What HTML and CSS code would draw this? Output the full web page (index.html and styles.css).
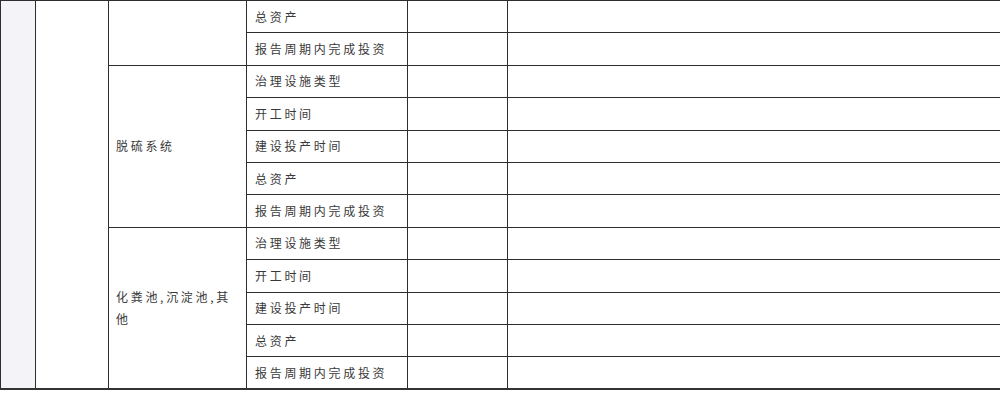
FILE: index.html
```html
<!DOCTYPE html>
<html lang="zh">
<head>
<meta charset="utf-8">
<link rel="stylesheet" href="styles.css">
</head>
<body>
<table class="grid">
  <colgroup>
    <col class="c1"><col class="c2"><col class="c3"><col class="c4"><col class="c5"><col class="c6">
  </colgroup>
  <tbody>
    <tr><td class="shade" rowspan="12"></td><td rowspan="12"></td><td rowspan="2"></td><td class="label">总资产</td><td></td><td></td></tr>
    <tr><td class="label">报告周期内完成投资</td><td></td><td></td></tr>
    <tr><td class="group" rowspan="5">脱硫系统</td><td class="label">治理设施类型</td><td></td><td></td></tr>
    <tr><td class="label">开工时间</td><td></td><td></td></tr>
    <tr><td class="label">建设投产时间</td><td></td><td></td></tr>
    <tr><td class="label">总资产</td><td></td><td></td></tr>
    <tr><td class="label">报告周期内完成投资</td><td></td><td></td></tr>
    <tr><td class="group" rowspan="5">化粪池,沉淀池,其他</td><td class="label">治理设施类型</td><td></td><td></td></tr>
    <tr><td class="label">开工时间</td><td></td><td></td></tr>
    <tr><td class="label">建设投产时间</td><td></td><td></td></tr>
    <tr><td class="label">总资产</td><td></td><td></td></tr>
    <tr class="last"><td class="label">报告周期内完成投资</td><td></td><td></td></tr>
  </tbody>
</table>
</body>
</html>
```

FILE: styles.css
```css
html, body {
  margin: 0;
  padding: 0;
  background: #ffffff;
}
.grid {
  width: 1000px;
  table-layout: fixed;
  border-collapse: collapse;
  font-family: "Noto Sans CJK SC", "Noto Sans", sans-serif;
  font-size: 12px;
  letter-spacing: 2.7px;
  color: #3a3a3a;
  border-bottom: 2px solid #333;
}
.c1 { width: 35px; }
.c2 { width: 73px; }
.c3 { width: 138px; }
.c4 { width: 161px; }
.c5 { width: 100px; }
.c6 { width: 493px; }
.grid tr {
  height: 32.4px;
}
.grid td {
  border: 1px solid #2e2e2e;
  padding: 0 8px;
  vertical-align: middle;
  line-height: 22px;
}
.grid td.shade {
  background: #f3f3f8;
}
.grid td.group {
  padding: 0 6px 0 7px;
}
```
